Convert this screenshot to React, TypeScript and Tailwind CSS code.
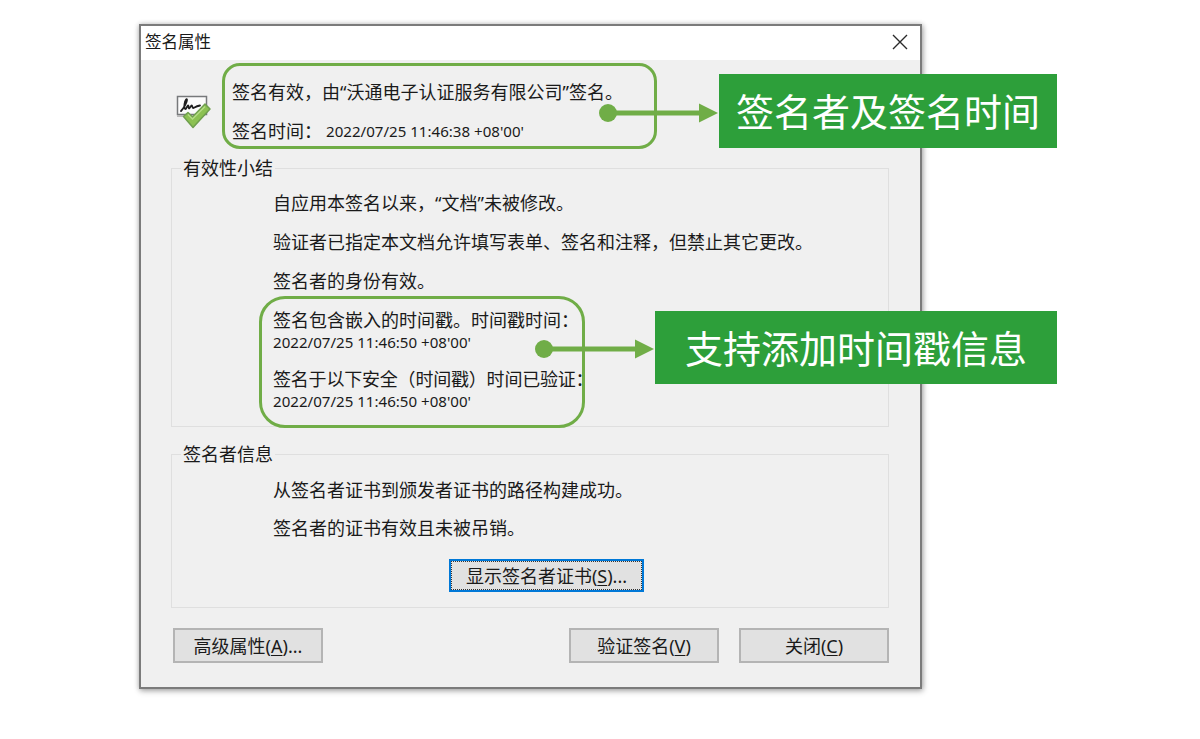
import React from "react";

const Underlined = ({ label, hotkey, tail = "" }: { label: string; hotkey: string; tail?: string }) => (
  <span>
    {label}(<span className="underline underline-offset-2">{hotkey}</span>){tail}
  </span>
);

const SignatureIcon = () => (
  <svg width="36" height="36" viewBox="0 0 36 36">
    <rect x="1.500" y="1.500" width="29" height="18" fill="#fbfbfb" stroke="#77797b" strokeWidth="1.500" />
    <path d="M1 21h22" stroke="#b9b9b9" strokeWidth="2" />
    <path
      d="M5 16c3-3 6-9 6-11 0-2-2 0-2.500 4-.4 3 0 5 .8 5 1.200 0 2-3.500 2.800-3.500.8 0 .2 3 1 3 1 0 1.700-3 2.600-3 .8 0 .6 2.500 1.500 2.500 1 0 2-1.500 6.800-2.500"
      fill="none"
      stroke="#1d1d1d"
      strokeWidth="1.800"
      strokeLinecap="round"
    />
    <path
      d="M7.500 21.500l4.500-4 4.500 4.500L29 9l5 5L17 32.500z"
      fill="#8cc152"
      stroke="#6f9f4e"
      strokeWidth="1.500"
      strokeLinejoin="round"
    />
    <path d="M12 19.500l4.500 4.500L29 11.500" fill="none" stroke="#b5dc86" strokeWidth="1.500" />
  </svg>
);

const Arrow = ({ width }: { width: number }) => (
  <svg width={width} height="20" viewBox={`0 0 ${width} 20`} className="block">
    <circle cx="9" cy="10" r="9" fill="#70ad47" />
    <rect x="9" y="7.500" width={width - 28} height="5" fill="#70ad47" />
    <path d={`M${width - 20} 0.500L${width - 1} 10L${width - 20} 19.500z`} fill="#70ad47" />
  </svg>
);

const DialogButton = ({ children }: { children: React.ReactNode }) => (
  <button className="flex h-[35px] w-[150px] items-center justify-center border-2 border-[#b4b4b4] bg-[#e1e1e1] text-[18px] leading-none text-[#1a1a1a]">
    {children}
  </button>
);

const Callout = ({ children, className }: { children: React.ReactNode; className: string }) => (
  <div
    className={`absolute flex items-center justify-center bg-[#2d9f3a] text-[38px] leading-none text-white ${className}`}
  >
    {children}
  </div>
);

export default function App() {
  return (
    <div className="relative h-[739px] w-[1200px] overflow-hidden bg-white pl-[139px] pt-[24px] font-['Noto_Sans','Noto_Sans_CJK_SC',sans-serif] text-[18px] text-[#1a1a1a]">
      <div className="h-[665px] w-[783px] border-2 border-[#7b7b7b] bg-[#f0f0f0] shadow-[0_0_5px_rgba(0,0,0,0.18),1px_2px_6px_rgba(0,0,0,0.3)]">
        <div className="flex h-[34px] items-center justify-between bg-white pb-[2px] pl-[4px] pr-[12px]">
          <span className="text-[16.500px] leading-none">签名属性</span>
          <svg width="16" height="16" viewBox="0 0 16 16">
            <path d="M1 1l14 14M15 1L1 15" stroke="#2a2a2a" strokeWidth="1.400" />
          </svg>
        </div>

        <div className="flex h-[96px] pl-[35px]">
          <div className="mt-[35px]">
            <SignatureIcon />
          </div>
          <div className="ml-[20px] flex flex-col">
            <div className="mt-[20px] h-[24px] leading-[24px]">
              签名有效，由“沃通电子认证服务有限公司”签名。
            </div>
            <div className="mt-[15px] flex h-[24px] items-center leading-[24px]">
              <span className="w-[94px]">签名时间：</span>
              <span className="text-[15.100px]">2022/07/25 11:46:38 +08'00'</span>
            </div>
          </div>
        </div>

        <div className="flex flex-col pl-[30px] pr-[31px]">
          <fieldset className="h-[271px] border border-[#dfdfdf]">
            <legend className="ml-[9px] h-[24px] px-[2px] leading-[24px]">有效性小结</legend>
            <div className="flex flex-col pl-[101px]">
              <div className="mt-[11px] h-[24px] leading-[24px]">自应用本签名以来，“文档”未被修改。</div>
              <div className="mt-[15px] h-[24px] leading-[24px]">验证者已指定本文档允许填写表单、签名和注释，但禁止其它更改。</div>
              <div className="mt-[15px] h-[24px] leading-[24px]">签名者的身份有效。</div>
              <div className="mt-[15px] h-[24px] leading-[24px]">签名包含嵌入的时间戳。时间戳时间：</div>
              <div className="h-[20px] text-[15.100px] leading-[20px]">2022/07/25 11:46:50 +08'00'</div>
              <div className="mt-[15px] h-[24px] whitespace-nowrap tracking-[-0.2px] leading-[24px]">
                签名于以下安全（时间戳）时间已验证：
              </div>
              <div className="h-[20px] text-[15.100px] leading-[20px]">2022/07/25 11:46:50 +08'00'</div>
            </div>
          </fieldset>

          <fieldset className="mt-[15px] h-[166px] border border-[#dfdfdf]">
            <legend className="ml-[9px] h-[24px] px-[2px] leading-[24px]">签名者信息</legend>
            <div className="flex flex-col items-start pl-[101px]">
              <div className="mt-[12px] h-[24px] leading-[24px]">从签名者证书到颁发者证书的路径构建成功。</div>
              <div className="mt-[14px] h-[24px] leading-[24px]">签名者的证书有效且未被吊销。</div>
              <button className="ml-[176px] mt-[19px] flex h-[33px] w-[195px] items-center justify-center border-2 border-[#0078d7] bg-[#e1e1e1] text-[18px] leading-none outline-1 -outline-offset-3 outline-dotted outline-[#333333]">
                <Underlined label="显示签名者证书" hotkey="S" tail="..." />
              </button>
            </div>
          </fieldset>

          <div className="mt-[20px] flex items-center pl-[2px]">
            <DialogButton>
              <Underlined label="高级属性" hotkey="A" tail="..." />
            </DialogButton>
            <div className="ml-[246px]">
              <DialogButton>
                <Underlined label="验证签名" hotkey="V" />
              </DialogButton>
            </div>
            <div className="ml-[20px]">
              <DialogButton>
                <Underlined label="关闭" hotkey="C" />
              </DialogButton>
            </div>
          </div>
        </div>
      </div>

      <div className="absolute left-[222px] top-[63px] h-[86px] w-[435px] rounded-[18px] border-[3px] border-[#70ad47]" />
      <div className="absolute left-[259px] top-[296px] h-[132px] w-[326px] rounded-[26px] border-[3px] border-[#70ad47]" />

      <div className="absolute left-[599px] top-[103px]">
        <Arrow width={120} />
      </div>
      <div className="absolute left-[535px] top-[339px]">
        <Arrow width={120} />
      </div>

      <Callout className="left-[719px] top-[74px] h-[74px] w-[338px]">签名者及签名时间</Callout>
      <Callout className="left-[655px] top-[311px] h-[73px] w-[402px]">支持添加时间戳信息</Callout>
    </div>
  );
}
